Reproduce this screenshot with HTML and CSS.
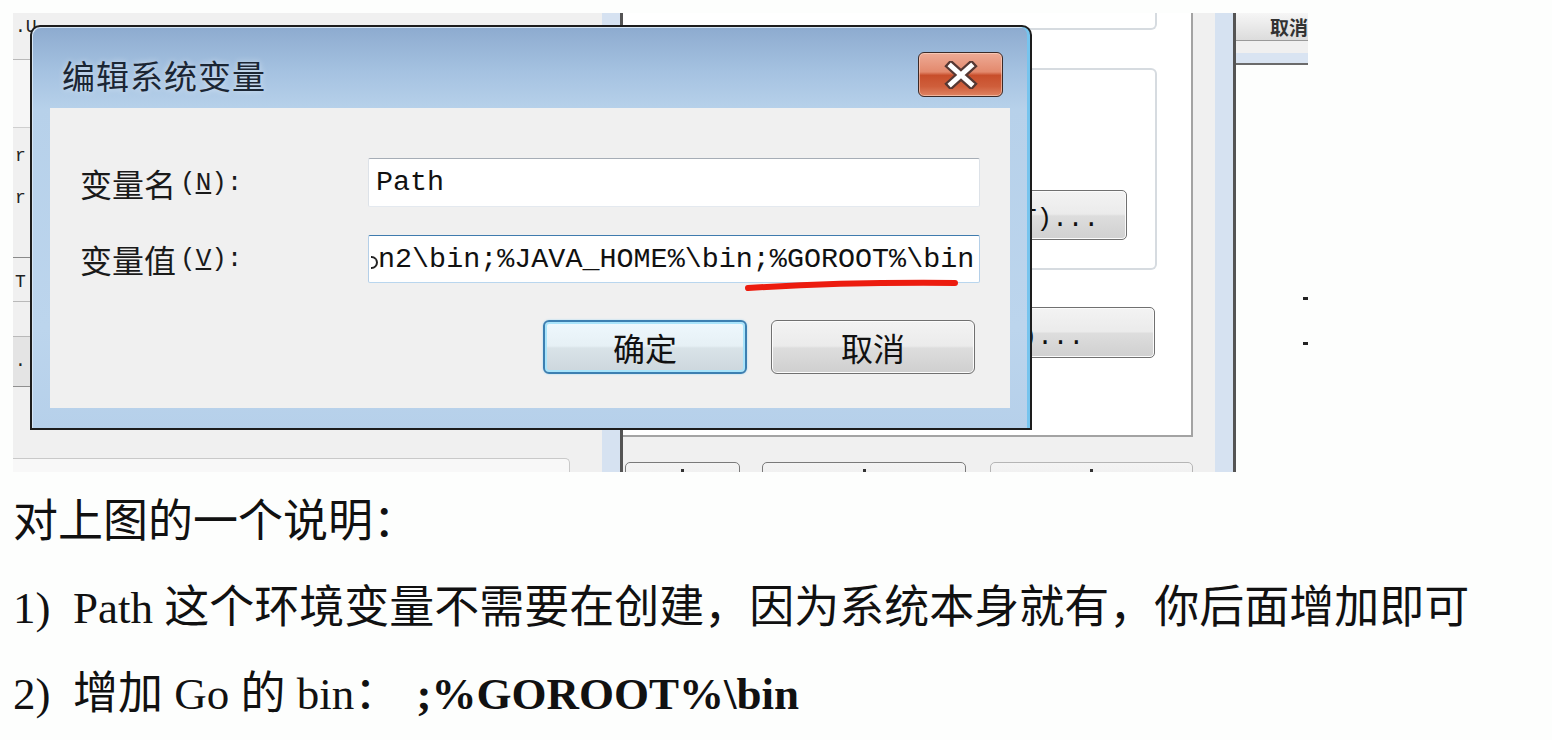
FILE: index.html
```html
<!DOCTYPE html>
<html lang="zh-CN">
<head>
<meta charset="utf-8">
<title>编辑系统变量</title>
<link rel="stylesheet" href="styles.css">
</head>
<body>
<div class="shot">
  <div class="bg-left">
    <div class="bl-row bl-r1"><span class="bl-txt">.U</span></div>
    <div class="bl-row bl-r2"></div>
    <div class="bl-row bl-r3"><span class="bl-txt">r</span><span class="bl-txt">r</span></div>
    <div class="bl-row bl-r4"><span class="bl-txt">T</span></div>
    <div class="bl-row bl-r5"></div>
    <div class="bl-row bl-r6"><span class="bl-txt">.</span></div>
    <div class="bl-row bl-r7"></div>
    <div class="bl-box"></div>
  </div>
  <div class="strip-blue"></div>
  <div class="strip-dark"></div>
  <div class="bg-mid">
    <div class="mid-white">
      <div class="grp grp-top"></div>
      <div class="grp grp-main">
        <div class="bg-btn btn-t">编辑(T)...</div>
      </div>
      <div class="bg-btn btn-d">删除(L)...</div>
    </div>
    <div class="mid-foot">
      <div class="foot-btn fb1"></div>
      <div class="foot-btn fb2"></div>
      <div class="foot-btn fb3"></div>
    </div>
  </div>
  <div class="strip-gray"></div>
  <div class="strip-blue"></div>
  <div class="strip-dark"></div>
  <div class="bg-right">
    <div class="tab-btn">取消</div>
    <div class="tab-gap"></div>
    <div class="tab-blue"></div>
    <div class="dash dash1"></div>
    <div class="dash dash2"></div>
  </div>

  <div class="dialog">
    <div class="titlebar">
      <div class="title">编辑系统变量</div>
      <div class="close">
        <svg width="36" height="28" viewBox="0 0 36 28">
          <path d="M8 5 L28 23 M28 5 L8 23" stroke="#563833" stroke-width="9.5" fill="none" stroke-linecap="square"/>
          <path d="M8 5 L28 23 M28 5 L8 23" stroke="#ffffff" stroke-width="5" fill="none" stroke-linecap="square"/>
        </svg>
      </div>
    </div>
    <div class="client">
      <div class="form">
        <div class="label">变量名<span class="acc">(<u>N</u>):</span></div>
        <div class="input"><span class="val">Path</span></div>
        <div class="label">变量值<span class="acc">(<u>V</u>):</span></div>
        <div class="input input-focus"><span class="partial"></span><span class="val">n2\bin;%JAVA_HOME%\bin;%GOROOT%\bin</span></div>
      </div>
      <div class="actions">
        <div class="btn btn-ok">确定</div>
        <div class="btn">取消</div>
      </div>
    </div>
  </div>

  <svg class="redline" width="220" height="16" viewBox="0 0 220 16">
    <path d="M5 11 Q100 5 212 6" stroke="#ec1c0f" stroke-width="6" fill="none" stroke-linecap="round"/>
  </svg>
</div>

<div class="notes">
  <p>对上图的一个说明：</p>
  <p><span class="num">1)</span>Path 这个环境变量不需要在创建，因为系统本身就有，你后面增加即可</p>
  <p><span class="num">2)</span>增加 Go 的 bin： <b class="path-b">;%GOROOT%\bin</b></p>
</div>
</body>
</html>
```

FILE: styles.css
```css
* { box-sizing: border-box; }
html, body { margin: 0; padding: 0; background: #fdfefd; }
body { font-family: "Noto Sans CJK SC", sans-serif; color: #111; }

/* ---------- screenshot canvas ---------- */
.shot {
  position: relative;
  margin: 13px 0 0 13px;
  width: 1295px;
  height: 459px;
  display: grid;
  grid-template-columns: 589px 18px 3px 570px 22px 18px 3px 72px;
  grid-template-rows: 459px;
}
.shot > * { min-height: 0; overflow: hidden; }

.bg-left {
  background: #f0f0f0;
  display: flex;
  flex-direction: column;
}
.bl-row { border-bottom: 1px solid #b9b9b9; display: flex; flex-direction: column; padding-left: 2px; flex-shrink: 0; }
.bl-txt { font-family: "Liberation Mono", monospace; font-size: 18px; line-height: 20px; color: #222; }
.bl-r1 { height: 47px; padding-top: 4px; }
.bl-r2 { height: 68px; background: #f6f6f6; border-bottom-color: #cfcfcf; }
.bl-r3 { height: 130px; padding-top: 18px; gap: 22px; border-bottom-color: #8a8a8a; }
.bl-r4 { height: 44px; padding-top: 14px; }
.bl-r5 { height: 35px; }
.bl-r6 { height: 50px; background: #e4e4e4; padding-top: 14px; border-bottom-color: #8f8f8f; }
.bl-r7 { height: 71px; border-bottom: none; }
.bl-box {
  flex: 1;
  min-height: 0;
  width: 557px;
  background: #f8f8f8;
  border-top: 1px solid #c9c9c9;
  border-right: 1px solid #c9c9c9;
  border-radius: 0 5px 0 0;
}

.strip-blue { background: #d6e2f1; }
.strip-dark { background: #545454; }
.strip-gray { background: #f0f0f0; }

.bg-mid { display: flex; flex-direction: column; background: #f0f0f0; }
.mid-white {
  height: 424px;
  flex-shrink: 0;
  background: #ffffff;
  border-right: 2px solid #a3a3a3;
  border-bottom: 2px solid #a3a3a3;
  display: flex;
  flex-direction: column;
}
.grp { width: 534px; border: 2px solid #d6dbe0; border-left: none; flex-shrink: 0; }
.grp-top { height: 17px; border-top: none; border-radius: 0 0 6px 0; }
.grp-main {
  height: 202px;
  margin-top: 38px;
  border-radius: 0 6px 6px 0;
  display: flex;
  flex-direction: column;
  align-items: flex-end;
}
.bg-btn {
  height: 50px;
  width: 180px;
  flex-shrink: 0;
  border: 1.5px solid #707070;
  border-radius: 5px;
  background: linear-gradient(180deg, #f3f3f3 0%, #ebebeb 48%, #dddddd 52%, #d0d0d0 100%);
  box-shadow: inset 0 0 0 1px #fbfbfb;
  font-family: "Liberation Mono", "Noto Sans CJK SC", monospace;
  font-size: 26px;
  color: #111;
  display: flex;
  align-items: center;
  justify-content: flex-end;
  white-space: nowrap;
  overflow: hidden;
}
.btn-t { margin-top: 120px; margin-right: 28px; padding-right: 27px; }
.btn-d { margin-top: 37px; margin-left: auto; margin-right: 36px; width: 220px; height: 51px; padding-right: 70px; }

.mid-foot {
  flex: 1;
  min-height: 0;
  display: flex;
  align-items: flex-start;
  padding-top: 25px;
  overflow: hidden;
}
.foot-btn {
  height: 30px;
  flex-shrink: 0;
  border: 1.5px solid #7a7a7a;
  border-radius: 5px 5px 0 0;
  background: linear-gradient(180deg, #f4f4f4, #ebebeb);
  display: flex;
  justify-content: center;
}
.foot-btn::before {
  content: "";
  width: 3px;
  height: 3px;
  margin-top: 6px;
  background: #333;
}
.fb1 { width: 115px; margin-left: 2px; }
.fb2 { width: 204px; margin-left: 22px; }
.fb3 { width: 203px; margin-left: 24px; border-color: #b5b5b5; }

.bg-right { display: flex; flex-direction: column; background: #fdfefd; }
.tab-btn {
  height: 28px;
  flex-shrink: 0;
  background: linear-gradient(180deg, #f6f6f6, #dcdcdc);
  border-bottom: 1px solid #9a9a9a;
  font-size: 19px;
  font-weight: 700;
  line-height: 27px;
  color: #333;
  padding-left: 34px;
  white-space: nowrap;
  overflow: hidden;
}
.tab-gap { height: 12px; flex-shrink: 0; background: #f0f0f0; }
.tab-blue { height: 12px; flex-shrink: 0; background: #d9e4f2; border-bottom: 2px solid #6b6b6b; }
.dash { width: 5px; height: 3px; flex-shrink: 0; background: #222; margin-left: 67px; }
.dash1 { margin-top: 232px; }
.dash2 { margin-top: 42px; }

/* ---------- dialog ---------- */
.dialog {
  position: absolute;
  left: 17px;
  top: 12px;
  width: 1002px;
  height: 405px;
  border: 2px solid #1d1d1d;
  border-radius: 10px 10px 0 0;
  background: linear-gradient(180deg, #8dabcf 0px, #a5c2e1 45px, #b7d1ea 82px, #bcd5ed 300px, #b6d0ea 100%);
  box-shadow: inset -3px 0 0 #76c4ee, inset 1px 1px 0 #d6e6f5;
  display: flex;
  flex-direction: column;
  padding: 0 20px 20px 18px;
  overflow: visible;
}
.titlebar { height: 81px; display: flex; justify-content: space-between; align-items: flex-start; }
.title {
  margin: 30px 0 0 12px;
  font-size: 33px;
  line-height: 36px;
  letter-spacing: 1px;
  color: #1b2634;
  text-shadow: 0 0 6px rgba(255, 255, 255, 0.55);
}
.close {
  width: 85px;
  height: 45px;
  margin: 25px 7px 0 0;
  border: 1.5px solid #3b2a28;
  border-radius: 6px;
  background: linear-gradient(180deg, #eeab96 0%, #e3896d 44%, #c84e2b 52%, #cf5e3b 78%, #df8463 100%);
  box-shadow: inset 0 0 0 1px rgba(255, 222, 205, 0.55);
  display: flex;
  align-items: center;
  justify-content: center;
}

.client {
  flex: 1;
  background: #f0f0f0;
  padding: 50px 30px 0 30px;
}
.form {
  display: grid;
  grid-template-columns: 288px 612px;
  grid-template-rows: 49px 48px;
  row-gap: 28px;
}
.label {
  font-size: 32px;
  color: #1a1a1a;
  display: flex;
  align-items: center;
  white-space: nowrap;
}
.acc { font-family: "Liberation Mono", monospace; font-size: 26px; margin-left: 4px; }
.input {
  background: #ffffff;
  border: 1px solid;
  border-color: #a6adb6 #dde2e8 #e4e9ef #dde2e8;
  border-radius: 2px;
  display: flex;
  align-items: center;
  padding: 0 8px 0 7px;
  overflow: hidden;
  font-family: "Liberation Mono", monospace;
  font-size: 28.4px;
  color: #111;
}
.val { white-space: pre; flex-shrink: 0; }
.input-focus {
  padding-left: 2px;
  border-color: #3f7bae #b4cfe8 #b9d6ee #b4cfe8;
}
.partial {
  width: 7px;
  height: 13px;
  margin-top: 6px;
  border: 2px solid #222;
  border-left: none;
  border-radius: 0 7px 7px 0;
  flex-shrink: 0;
}
.actions {
  display: flex;
  justify-content: flex-end;
  gap: 24px;
  margin-top: 37px;
  padding-right: 5px;
}
.btn {
  width: 204px;
  height: 54px;
  border: 1.5px solid #707070;
  border-radius: 6px;
  background: linear-gradient(180deg, #f3f3f3 0%, #ebebeb 48%, #dddddd 52%, #cfcfcf 100%);
  box-shadow: inset 0 0 0 1px #fcfcfc;
  font-size: 32px;
  color: #111;
  display: flex;
  align-items: center;
  justify-content: center;
}
.btn-ok {
  border: 2px solid #3c7fb1;
  box-shadow: inset 0 0 0 2px #a9e4fb, 0 0 2px #9ad3f3;
  background: linear-gradient(180deg, #eef8fd 0%, #e6f0f5 48%, #d9e3e8 52%, #cdd7dd 100%);
}

.redline { position: absolute; left: 730px; top: 264px; }

/* ---------- notes ---------- */
.notes { margin: 7px 0 0 13px; }
.notes p {
  margin: 0;
  height: 86px;
  line-height: 86px;
  font-family: "Liberation Serif", "Noto Sans CJK SC", serif;
  font-size: 45px;
  color: #111;
  white-space: nowrap;
}
.num { display: inline-block; width: 60px; }
.path-b { font-size: 45px; font-weight: 700; margin-left: 6px; }
```
